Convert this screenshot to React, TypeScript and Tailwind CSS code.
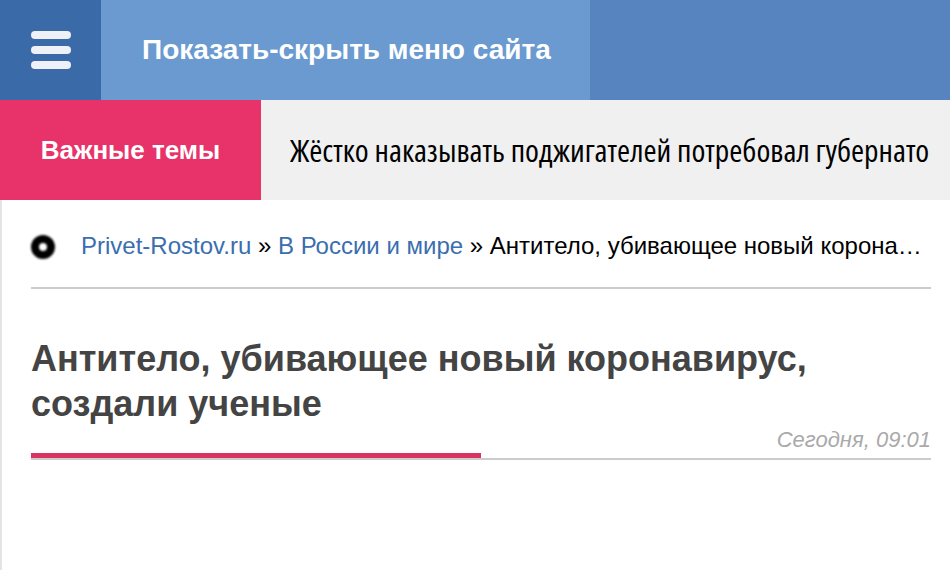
import React from 'react';

const sans = { fontFamily: '"Liberation Sans", Arial, sans-serif' };

function Header() {
  return (
    <div className="flex h-[100px]">
      <div className="w-[101px] bg-[#3b6aa9] flex flex-col items-center justify-center gap-[7px]">
        <span className="block w-[40px] h-[8px] rounded-full bg-[#eef1f7] blur-[0.6px]" />
        <span className="block w-[40px] h-[8px] rounded-full bg-[#eef1f7] blur-[0.6px]" />
        <span className="block w-[40px] h-[8px] rounded-full bg-[#eef1f7] blur-[0.6px]" />
      </div>
      <div className="w-[489px] bg-[#6a9ad0] flex items-center pl-[41px]">
        <span className="text-white font-bold text-[28px]">Показать-скрыть меню сайта</span>
      </div>
      <div className="flex-1 bg-[#5784bf]" />
    </div>
  );
}

function Ticker() {
  return (
    <div className="flex h-[100px]">
      <div className="w-[261px] bg-[#e8336a] flex items-center justify-center">
        <span className="text-white font-bold text-[26px]">Важные темы</span>
      </div>
      <div className="flex-1 bg-[#f0f0f0] flex items-center pl-[29px] pr-[20px] overflow-hidden">
        <div className="overflow-hidden whitespace-nowrap">
          <span
            className="text-black text-[31.6px] [font-stretch:75%]"
            style={{ fontFamily: '"Open Sans", "DejaVu Sans Condensed", sans-serif' }}
          >
            Жёстко наказывать поджигателей потребовал губернатор
          </span>
        </div>
      </div>
    </div>
  );
}

export default function App() {
  return (
    <div className="w-[950px] h-[570px] bg-white overflow-hidden" style={sans}>
      <Header />
      <Ticker />
      <div className="border-l-2 border-[#e4e4e4] h-[370px] pl-[29px] pr-[19px]">
        <div className="flex items-center h-[87px] pt-[4px]">
          <span className="block w-[24px] h-[24px] rounded-full border-[8px] border-black blur-[1px] shrink-0 mt-[2px]" />
          <div className="ml-[26px] text-[24px] text-black whitespace-nowrap overflow-hidden text-ellipsis">
            <span className="text-[#3a6eae]">Privet-Rostov.ru</span> » <span className="text-[#3a6eae]">В России и мире</span> » Антитело, убивающее новый коронавирус, создали ученые
          </div>
        </div>
        <div className="h-[2px] bg-[#cccccc]" />
        <h1 className="mt-[47px] text-[36px] leading-[45px] font-bold text-[#444444]">
          Антитело, убивающее новый коронавирус,<br />создали ученые
        </h1>
        <div className="flex justify-end mt-[1px] h-[26px]">
          <span className="italic text-[#aaaaaa] text-[22px] leading-[26px]">Сегодня, 09:01</span>
        </div>
        <div className="w-[450px] h-[5px] bg-[#d9335f]" />
        <div className="h-[2px] bg-[#cccccc]" />
      </div>
    </div>
  );
}
